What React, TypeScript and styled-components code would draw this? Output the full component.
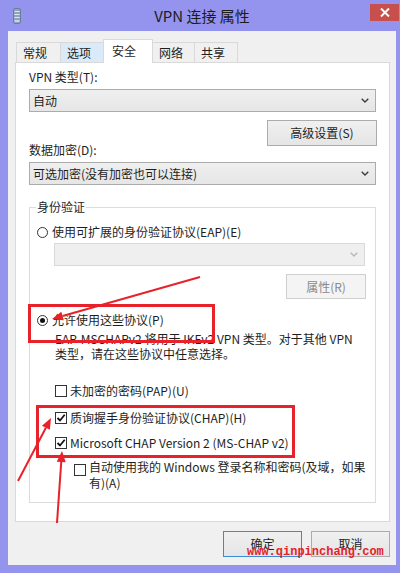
import React from "react";
import styled, { createGlobalStyle, css } from "styled-components";

const GlobalStyle = createGlobalStyle`
  html, body { margin: 0; padding: 0; background: #9494ef; }
  #root { width: 400px; height: 573px; }
`;

const Window = styled.div`
  position: relative;
  width: 400px;
  height: 573px;
  background: #9494ef;
  display: flex;
  flex-direction: column;
  overflow: hidden;
  font-family: "Noto Sans CJK SC", "Microsoft YaHei", sans-serif;
  font-size: 12px;
  color: #1e1e1e;
`;

const TitleBar = styled.div`
  height: 31px;
  flex: none;
  display: grid;
  grid-template-columns: 1fr auto 1fr;
  align-items: center;
`;

const TitleIcon = styled.svg`
  margin-left: 13px;
  width: 8px;
  height: 16px;
  display: block;
`;

const TitleText = styled.div`
  font-size: 15px;
  color: #1c1c1c;
  line-height: 20px;
  margin-left: 4px;
`;

const CloseButton = styled.div`
  justify-self: end;
  align-self: start;
  margin-top: 4px;
  margin-right: 1px;
  width: 29px;
  height: 17px;
  background: #c7504c;
  display: flex;
  align-items: center;
  justify-content: center;
`;

const Client = styled.div`
  flex: 1;
  margin: 0 4px 8px 8px;
  background: #f0f0f0;
  padding: 8px 6px 8px 7px;
  display: flex;
  flex-direction: column;
`;

const TabBar = styled.div`
  display: flex;
  align-items: flex-end;
  padding-left: 1px;
  position: relative;
  z-index: 1;
`;

const Tab = styled.div<{ $w: number; $active?: boolean; $hover?: boolean }>`
  width: ${(p) => p.$w}px;
  box-sizing: border-box;
  height: 20px;
  border: 1px solid #d9d9d9;
  border-bottom: none;
  margin-left: -1px;
  &:first-child { margin-left: 0; }
  padding-left: 6px;
  line-height: 19px;
  background: ${(p) => (p.$hover ? "#dbeaf9" : "#f0f0f0")};
  color: #1e1e1e;
  ${(p) =>
    p.$active &&
    css`
      height: 24px;
      margin-bottom: -1px;
      background: #fff;
      padding-left: 8px;
      line-height: 22px;
      position: relative;
      z-index: 2;
    `}
`;

const Panel = styled.div`
  height: 460px;
  box-sizing: border-box;
  border: 1px solid #d9d9d9;
  background: #fff;
  padding: 6px 13px 0;
  display: flex;
  flex-direction: column;
`;

const FieldLabel = styled.div<{ $mt?: number }>`
  line-height: 16px;
  margin-top: ${(p) => p.$mt ?? 0}px;
`;

const Combo = styled.div<{ $mt?: number; $disabled?: boolean; $ml?: number }>`
  height: 23px;
  box-sizing: border-box;
  margin-top: ${(p) => p.$mt ?? 0}px;
  margin-left: ${(p) => p.$ml ?? 0}px;
  border: 1px solid ${(p) => (p.$disabled ? "#d9d9d9" : "#acacac")};
  background: ${(p) =>
    p.$disabled ? "#efefef" : "linear-gradient(#efefef, #e6e6e6)"};
  display: flex;
  align-items: center;
  justify-content: space-between;
  padding: 0 6px 0 3px;
  line-height: 16px;
`;

const Chevron = ({ color }: { color: string }) => (
  <svg width="8" height="5" viewBox="0 0 8 5">
    <path d="M0.7 0.7 L4 4 L7.3 0.7" fill="none" stroke={color} strokeWidth="1.3" />
  </svg>
);

const Button = styled.div<{ $w: number; $mt?: number; $disabled?: boolean; $default?: boolean; $h?: number }>`
  width: ${(p) => p.$w}px;
  height: ${(p) => p.$h ?? 26}px;
  box-sizing: border-box;
  margin-top: ${(p) => p.$mt ?? 0}px;
  align-self: flex-end;
  border: 1px solid
    ${(p) => (p.$default ? "#3c8ad6" : p.$disabled ? "#cfcfcf" : "#acacac")};
  background: ${(p) =>
    p.$disabled ? "#f4f4f4" : "linear-gradient(#f0f0f0, #e5e5e5)"};
  color: ${(p) => (p.$disabled ? "#8a8a8a" : "#1e1e1e")};
  display: flex;
  align-items: center;
  justify-content: center;
  line-height: 16px;
`;

const Group = styled.fieldset`
  margin: 14px 0 0;
  padding: 9px 10px 11px 7px;
  border: 1px solid #dcdcdc;
  min-width: 0;
  display: flex;
  flex-direction: column;
`;

const Legend = styled.legend`
  padding: 0 1px;
  margin-left: -1px;
  line-height: 16px;
  font-size: 12px;
`;

const OptionRow = styled.div<{ $mt?: number; $ml?: number; $gap?: number }>`
  display: flex;
  align-items: center;
  gap: ${(p) => p.$gap ?? 4}px;
  line-height: 16px;
  margin-top: ${(p) => p.$mt ?? 0}px;
  margin-left: ${(p) => p.$ml ?? 0}px;
  white-space: nowrap;
`;

const MultiRow = styled(OptionRow)`
  align-items: flex-start;
`;

const RadioCircle = styled.span<{ $checked?: boolean }>`
  width: 11px;
  height: 11px;
  box-sizing: border-box;
  border: 1px solid #333;
  border-radius: 50%;
  background: #fff;
  display: flex;
  align-items: center;
  justify-content: center;
  flex: none;
  &::after {
    content: "";
    display: ${(p) => (p.$checked ? "block" : "none")};
    width: 5px;
    height: 5px;
    border-radius: 50%;
    background: #111;
  }
`;

const CheckBox = styled.span<{ $mt?: number }>`
  width: 12px;
  height: 12px;
  box-sizing: border-box;
  border: 1px solid #333;
  background: #fff;
  flex: none;
  display: flex;
  align-items: center;
  justify-content: center;
  margin-top: ${(p) => p.$mt ?? 0}px;
`;

const Check = () => (
  <svg width="10" height="10" viewBox="0 0 10 10">
    <path d="M1.5 5 L4 7.5 L8.7 1.8" fill="none" stroke="#111" strokeWidth="1.8" />
  </svg>
);

const Description = styled.div`
  margin: 3px 0 0 18px;
  line-height: 15px;
`;

const Footer = styled.div`
  display: flex;
  justify-content: flex-end;
  gap: 9px;
  padding-top: 9px;
`;

const Overlay = styled.svg`
  position: absolute;
  left: 0;
  top: 0;
  width: 400px;
  height: 573px;
  pointer-events: none;
`;

const Watermark = styled.div`
  position: absolute;
  left: 247px;
  top: 544px;
  font-family: "Liberation Mono", monospace;
  font-size: 12px;
  font-weight: bold;
  color: #e3232a;
  line-height: 16px;
  pointer-events: none;
`;

const RED = "#e8222b";

const Arrow = ({ x1, y1, x2, y2 }: { x1: number; y1: number; x2: number; y2: number }) => {
  const dx = x2 - x1;
  const dy = y2 - y1;
  const len = Math.hypot(dx, dy);
  const ux = dx / len;
  const uy = dy / len;
  const hl = 11;
  const hw = 4.5;
  const bx = x2 - ux * hl;
  const by = y2 - uy * hl;
  const p1 = `${bx - uy * hw},${by + ux * hw}`;
  const p2 = `${bx + uy * hw},${by - ux * hw}`;
  return (
    <g>
      <line x1={x1} y1={y1} x2={bx} y2={by} stroke={RED} strokeWidth="2" />
      <polygon points={`${x2},${y2} ${p1} ${p2}`} fill={RED} />
    </g>
  );
};

export default function App() {
  return (
    <>
      <GlobalStyle />
      <Window>
        <TitleBar>
          <TitleIcon viewBox="0 0 8 16">
            <rect x="0.5" y="0.5" width="7" height="15" rx="1.5" fill="#8ea4be" stroke="#6d7f96" />
            <rect x="1.5" y="3" width="5" height="1" fill="#dfe8f2" />
            <rect x="1.5" y="6" width="5" height="1" fill="#dfe8f2" />
            <rect x="1.5" y="9" width="5" height="1" fill="#dfe8f2" />
            <rect x="1.5" y="12" width="5" height="2" fill="#c7d4e2" />
          </TitleIcon>
          <TitleText>VPN 连接 属性</TitleText>
          <CloseButton>
            <svg width="10" height="9" viewBox="0 0 10 9">
              <path d="M1 0.5 L9 8.5 M9 0.5 L1 8.5" stroke="#fff" strokeWidth="2" />
            </svg>
          </CloseButton>
        </TitleBar>
        <Client>
          <TabBar>
            <Tab $w={45}>常规</Tab>
            <Tab $w={44} $hover>选项</Tab>
            <Tab $w={50} $active>安全</Tab>
            <Tab $w={43}>网络</Tab>
            <Tab $w={44}>共享</Tab>
          </TabBar>
          <Panel>
            <FieldLabel>VPN 类型(T):</FieldLabel>
            <Combo $mt={4}>
              <span>自动</span>
              <Chevron color="#3a3a3a" />
            </Combo>
            <Button $w={110} $mt={8} style={{ marginRight: -1 }}>高级设置(S)</Button>
            <FieldLabel $mt={-4}>数据加密(D):</FieldLabel>
            <Combo $mt={4}>
              <span>可选加密(没有加密也可以连接)</span>
              <Chevron color="#3a3a3a" />
            </Combo>
            <Group>
              <Legend>身份验证</Legend>
              <OptionRow>
                <RadioCircle />
                <span>使用可扩展的身份验证协议(EAP)(E)</span>
              </OptionRow>
              <Combo $mt={3} $ml={17} $disabled>
                <span />
                <Chevron color="#b5b5b5" />
              </Combo>
              <Button $w={80} $h={25} $mt={8} $disabled style={{ marginRight: -1 }}>属性(R)</Button>
              <OptionRow $mt={13}>
                <RadioCircle $checked />
                <span>允许使用这些协议(P)</span>
              </OptionRow>
              <Description>
                EAP-MSCHAPv2 将用于 IKEv2 VPN 类型。对于其他 VPN
                <br />
                类型，请在这些协议中任意选择。
              </Description>
              <OptionRow $mt={22} $ml={18} $gap={3}>
                <CheckBox />
                <span>未加密的密码(PAP)(U)</span>
              </OptionRow>
              <OptionRow $mt={11} $ml={18} $gap={3}>
                <CheckBox>
                  <Check />
                </CheckBox>
                <span>质询握手身份验证协议(CHAP)(H)</span>
              </OptionRow>
              <OptionRow $mt={9} $ml={18} $gap={3}>
                <CheckBox>
                  <Check />
                </CheckBox>
                <span>Microsoft CHAP Version 2 (MS-CHAP v2)</span>
              </OptionRow>
              <MultiRow $mt={8} $ml={37} $gap={3}>
                <CheckBox $mt={5} />
                <span>
                  自动使用我的 Windows 登录名称和密码(及域，如果
                  <br />
                  有)(A)
                </span>
              </MultiRow>
            </Group>
          </Panel>
          <Footer>
            <Button $w={79} $default>确定</Button>
            <Button $w={79}>取消</Button>
          </Footer>
        </Client>
        <Watermark>www.qinpinchang.com</Watermark>
        <Overlay viewBox="0 0 400 573">
          <rect x="29.5" y="305.5" width="184" height="36" fill="none" stroke={RED} strokeWidth="3" />
          <rect x="37.5" y="406.5" width="256" height="50" fill="none" stroke={RED} strokeWidth="3" />
          <Arrow x1={200} y1={277} x2={52} y2={319} />
          <Arrow x1={18} y1={481} x2={51} y2={418} />
          <Arrow x1={57} y1={523} x2={62} y2={451} />
        </Overlay>
      </Window>
    </>
  );
}
